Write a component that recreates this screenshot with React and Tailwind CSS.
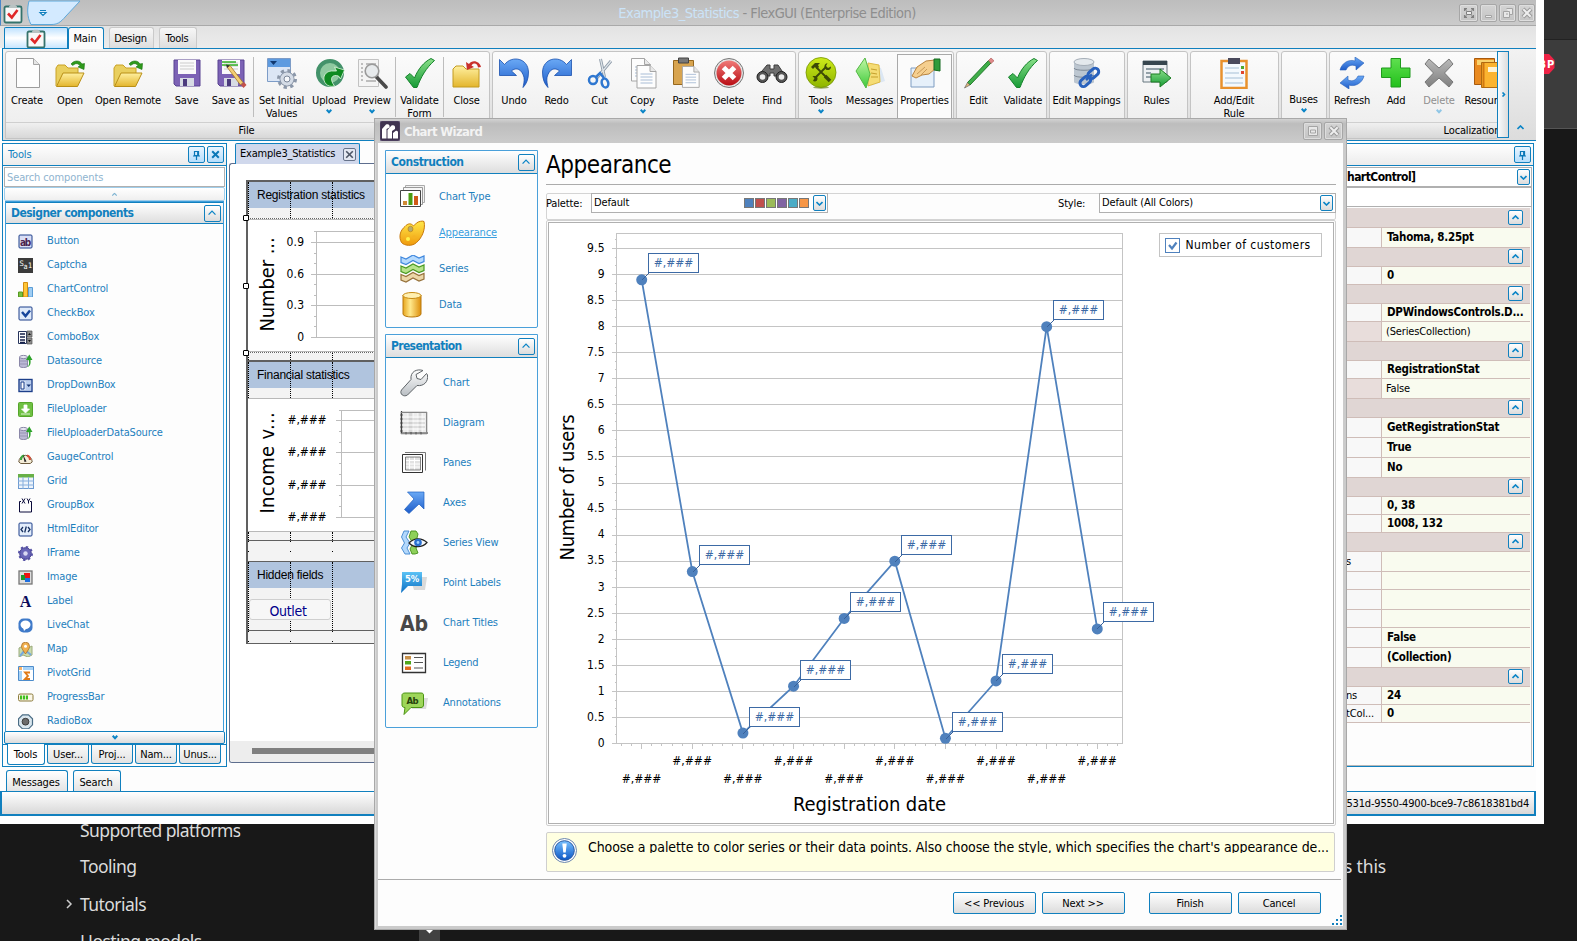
import React from "react";

const UI = "font-['DejaVu_Sans_Condensed','DejaVu_Sans',sans-serif] [font-stretch:75%]";
const SVG_FONT = { fontFamily: "'DejaVu Sans Condensed','DejaVu Sans',sans-serif" };

/* ---------- small glyphs ---------- */
const Chevron = ({ up, right, className = "text-[#0a84c6]", s = 1 }) => (
  <svg width={7 * s} height={5 * s} viewBox="0 0 7 5" className={`shrink-0 ${className}`}>
    <path d={right ? "M2.5 .5L4.5 2.5 2.5 4.5" : up ? "M.5 4L3.5 1 6.5 4" : "M.5 1L3.5 4 6.5 1"} fill="none" stroke="currentColor" strokeWidth={s > 1 ? 1.1 : 1.6} />
  </svg>
);
const DropMark = ({ className }) => (
  <svg width="6" height="5" viewBox="0 0 6 5" className={`shrink-0 ${className}`}><path d="M.7 .8L3 3.200 5.300 .8" fill="none" stroke="currentColor" strokeWidth="2" /></svg>
);

const BlueBtn = ({ className, children, hot }) => (
  <div className={`flex shrink-0 items-center justify-center rounded-[2px] border border-[#1180be] ${hot ? "bg-linear-to-b from-[#e9f5ff] to-[#b5defc]" : "bg-linear-to-b from-white to-[#dcdcdc]"} ${className}`}>{children}</div>
);

const PinGlyph = () => (
  <svg width="9" height="10" viewBox="0 0 9 10"><path d="M2.5 1.5h4v4h-4zM1 6h7M4.5 6v4M5.7 1.5v4" stroke="#0a78b8" strokeWidth="1.2" fill="none" /></svg>
);
const XGlyph = ({ c = "#0a78b8", w = 2 }) => (
  <svg width="9" height="9" viewBox="0 0 9 9"><path d="M1.2 1.2l6.6 6.6M7.8 1.2L1.2 7.8" stroke={c} strokeWidth={w} /></svg>
);

/* ---------- ribbon icons (32 x 32) ---------- */
const Folder = () => (
  <>
    <path d="M2 29V11l2-3h7l3 3h10v5" fill="#e9cf5e" stroke="#c9a227" />
    <path d="M2.5 29.5L9 16h21l-6.500 13.500z" fill="url(#gFold)" stroke="#b98f16" />
  </>
);
const GreenArrow = () => <path d="M17 7c3-4 9-4 11 0l2.500-.5-.5 6-6-2.500 2-1.500c-2-2.500-5-2.500-7 0z" fill="#2f9a1c" stroke="#16700b" strokeWidth=".6" />;
const Disk = () => (
  <>
    <path d="M3 3h26v26H5l-2-2z" fill="#7c62b5" stroke="#594391" />
    <path d="M7 3h18v14H7z" fill="#fafafa" />
    <path d="M9 6h14M9 9h14M9 12h14" stroke="#ccc" />
    <path d="M9 21h14v8H9z" fill="#d7dbe4" /><path d="M12 22h4v7h-4z" fill="#4b3a7d" />
  </>
);
const Check = () => <path d="M1.500 20l4.500-3.500 4.500 4.500C14 12 20 5 27 1.500l3.500 2C22 11 17 20 13 30.500H9.500z" fill="url(#gGreen)" stroke="#14822a" strokeLinejoin="round" />;
const UndoShape = () => <path d="M1.500 2.500l5 5C14-2 30 1 30.500 15c0 7-2 12-5.500 15.500 1-5 2-9 0-13C22 10.500 16.500 11 13.500 14l5 4.500h-17z" fill="url(#gBlue)" stroke="#1b50ae" strokeWidth=".8" />;
const Page = ({ x, y }) => (
  <g transform={`translate(${x} ${y})`}>
    <path d="M.5.5h13l6 6v16.500H.5z" fill="#fdfdfd" stroke="#a5a5a5" /><path d="M13.500.5v6h6" fill="#e8e8e8" stroke="#a5a5a5" />
    <path d="M4 9h12M4 12h12M4 15h12M4 18h12" stroke="#a9bdd6" />
  </g>
);

const RIBBON = {
  create: <><path d="M5.500 1.500h17l6 6v23h-23z" fill="#fdfdfd" stroke="#9c9c9c" /><path d="M22.500 1.500v6h6" fill="#e6e6e6" stroke="#a5a5a5" /></>,
  open: <><Folder /><GreenArrow /></>,
  save: <Disk />,
  saveas: <><Disk /><path d="M7 5h14M7 8h16" stroke="#2fae22" strokeWidth="1.500" /><path d="M12 10l3-1.500 13 17-2.500 2.500z" fill="#f4cf74" stroke="#a57622" strokeWidth=".8" /><path d="M26 28l3-3 2.500 3-3 3z" fill="#c3524a" /><path d="M11 7.500l4 1-3 2.500z" fill="#333" /></>,
  initial: <><path d="M1.500 1.500h23v23h-23z" fill="#dce6f5" stroke="#7d9cc7" /><path d="M2 2h22v8H2z" fill="#5e9be0" /><path d="M4 4h7l-3.500 4z" fill="#10386f" /><circle cx="21" cy="22" r="7" fill="#c4cedd" stroke="#7b8799" /><circle cx="21" cy="22" r="8.500" fill="none" stroke="#8b97a9" strokeWidth="3" strokeDasharray="3.300 3.400" /><circle cx="21" cy="22" r="6.500" fill="#d5dce6" /><circle cx="21" cy="22" r="3" fill="#f6f8fb" stroke="#7b8799" /></>,
  upload: <><circle cx="17" cy="16" r="12" fill="#8fc9a0" stroke="#43926a" strokeWidth="4" /><path d="M21.500 29c-12 3-15-14-3-15h5l-2 -4 10 3-4 9-2-3c-6-2-10 2-4 10z" fill="#0f8a22" stroke="#dff6e0" strokeWidth=".8" /></>,
  preview: <><path d="M2.500 2.500h20v27h-20z" fill="#f4f4f4" stroke="#c2c2c2" /><path d="M5 7h2M5 11h2M5 15h2M5 19h2M5 23h2M10 7h10M10 24h10" stroke="#aaa" strokeWidth="1.500" /><path d="M20.500 20l9.500 10" stroke="#4a4a4a" strokeWidth="3.600" strokeLinecap="round" /><circle cx="16" cy="14" r="6.800" fill="#e7eaec" stroke="#9a9a9a" strokeWidth="1.600" /></>,
  check: <Check />,
  close: <><path d="M2 12l3-3h7l3 3h13v18H2z" fill="url(#gFold)" stroke="#c29a20" /><path d="M30 10c-1-6-9-8-12-3l-3-2 1 8 7-3-2.500-1.500c2-3 6-2.500 6.500 2z" fill="#c9302b" /></>,
  undo: <UndoShape />,
  redo: <g transform="matrix(-1 0 0 1 32 0)"><UndoShape /></g>,
  cut: <g transform="translate(2 0)"><path d="M14.500 2l4 18M25 4L10 22" stroke="#8d9aa8" strokeWidth="3" /><path d="M14.500 2l4 18M25 4L10 22" stroke="#dfe5ea" strokeWidth="1.200" /><circle cx="7" cy="23" r="4" fill="none" stroke="#2f77d0" strokeWidth="2.500" /><ellipse cx="19" cy="26" rx="3.200" ry="4.500" fill="none" stroke="#2f77d0" strokeWidth="2.500" transform="rotate(-15 19 26)" /><path d="M10 20l4-4 4 5" fill="none" stroke="#2f77d0" strokeWidth="2.500" /></g>,
  copy: <><Page x="4" y="1" /><Page x="9.500" y="8" /></>,
  paste: <><path d="M3.500 3.500h20v24h-20z" fill="#d8a44f" stroke="#96671d" /><path d="M8.500 1h10v5h-10z" fill="#777" stroke="#444" /><g transform="translate(12 9) scale(.88 .93)"><Page x="0" y="0" /></g></>,
  delete: <><circle cx="16" cy="16" r="14.500" fill="#e4e4e4" stroke="#777" /><circle cx="16" cy="16" r="12.500" fill="url(#gRed)" /><path d="M10.500 10.500l11 11M21.500 10.500l-11 11" stroke="#fff" strokeWidth="5" /></>,
  find: <><path d="M6 14l5-6h3v4h4V8h4l4 6 5 5H18v-3h-4v3H1z" fill="#6e6e6e" stroke="#3c3c3c" /><circle cx="6.500" cy="20" r="5.500" fill="#555" stroke="#222" /><circle cx="25.500" cy="20" r="5.500" fill="#555" stroke="#222" /><circle cx="6.500" cy="20" r="2.800" fill="#eee" /><circle cx="25.500" cy="20" r="2.800" fill="#eee" /></>,
  tools: <><ellipse cx="16" cy="30.500" rx="8" ry="1.200" fill="#97a860" /><circle cx="16" cy="15.500" r="15" fill="url(#gLime)" stroke="#739300" strokeWidth=".8" /><path d="M11 10l10 10M21 10L10.500 20.500" stroke="#3c4a06" strokeWidth="1.800" /><path d="M6 10l4-4h5l-2 2 1 2-2 2-2-2-2 2zM22.500 6l-1.500 3 2 2 3-1.500c0 3-2 4-4.500 3.500l-2-2c-.500-2.500.500-4.500 3-5zM8 24l1.500-3-2-1.500c2-1 5-.5 5 2s-2 3.500-4.500 2.500z" fill="#3c4a06" /><path d="M20 19l5 5" stroke="#3c4a06" strokeWidth="3.500" /></>,
  messages: <><path d="M17 8l10 3 4 13-14 5z" fill="#dce7f3" /><path d="M14 6l11 2 1 17-12 4z" fill="#f5dc74" stroke="#dcb944" /><path d="M17 12l6 1M17 16l6 1M17 20l7 0" stroke="#c49f2d" /><path d="M11 1l5 16-4 14L2 14z" fill="url(#gLeaf)" stroke="#54b845" /></>,
  props: <><path d="M2 11h23v19H2z" fill="#e6f0fa" stroke="#7e9dc2" /><path d="M3 19l5-9 9-6 9-1v9l-6 5-7 1-6 3z" fill="#f5cf8f" stroke="#b98440" /><path d="M8 17l8-7M11 19l7-7" stroke="#c99a58" /><path d="M25 2h6v12l-6-1z" fill="#2f9b3a" stroke="#156b20" /></>,
  edit: <><path d="M4.500 25.500L25.500 3.500l2.500 2.500L7 28z" fill="#3fae49" stroke="#227a2b" /><path d="M25.500 3.500l2.500-2.500 3 2.800L28 6.500z" fill="#e08a8a" stroke="#a55" strokeWidth=".6" /><path d="M1.500 31l3-5.500L7 28z" fill="#dcb77a" stroke="#555" strokeWidth=".6" /></>,
  maps: <><path d="M3 5v20c0 3 20 3 20 0V5" fill="#bcc6d0" /><path d="M3 11c0 3 20 3 20 0M3 18c0 3 20 3 20 0" fill="none" stroke="#7f8a96" /><ellipse cx="13" cy="5" rx="10" ry="3.500" fill="#e4e9ed" stroke="#a5aeb8" /><g fill="none" stroke="#2a62bd" strokeWidth="3"><rect x="8" y="21" width="12" height="7" rx="3.500" transform="rotate(-42 14 24)" /><rect x="16" y="13" width="12" height="7" rx="3.500" transform="rotate(-42 22 16)" /><path d="M15 23l6-5.500" strokeWidth="2.500" /></g></>,
  rules: <><path d="M2 4h24v21H2z" fill="#eef1f3" stroke="#66777f" /><path d="M2 4h24v4H2z" fill="#37464f" /><path d="M5 12h18M5 16h5M5 20h5" stroke="#93a1a9" strokeWidth="2" /><path d="M10 17h9v-5l11 9-11 9v-5h-9z" fill="url(#gGreen)" stroke="#1c7d22" /></>,
  addedit: <><path d="M3.500 4h25v27h-25z" fill="#f4f9fd" stroke="#e8912d" strokeWidth="2.500" /><path d="M10 1h12v6H10z" fill="#4a4a5c" /><path d="M7 11h14M7 16h14M7 21h18M7 26h18" stroke="#cddce9" strokeWidth="2" /><path d="M23 9h3v3h-3z" fill="#4fa92c" /><path d="M23 14h3v3h-3z" fill="#e0472f" /></>,
  refresh: <><path d="M4 13C6 5 14 2 19 4V0l9 6-8 7V9c-5-2-8 0-10 4z" fill="url(#gBlue)" stroke="#2a61bb" strokeWidth=".6" /><path d="M28 19c-2 8-10 11-15 9v4l-9-6 8-7v4c5 2 8 0 10-4z" fill="url(#gBlue)" stroke="#2a61bb" strokeWidth=".6" /></>,
  add: <path d="M11 1.500h9.500V11H30v9.500h-9.500V30H11v-9.500H1.500V11H11z" fill="url(#gGreen2)" stroke="#1f9a1c" />,
  del2: <path d="M6 2l10 9 10-9 4 5-8.500 9L30 25l-4 5-10-9-10 9-4-5 8.500-9L2 7z" fill="url(#gGray)" stroke="#777" />,
  res: <><path d="M1.500 1.500h20v26h-20z" fill="#e98a1f" stroke="#a85a0d" /><path d="M4 3h17v5H4z" fill="#f9d26c" /><path d="M8.500 5.500h22v25h-22z" fill="#fbb430" stroke="#b06a10" /><path d="M10.500 6v24" stroke="#d17811" strokeWidth="2" /><path d="M15 10h10v5H15z" fill="#fff4d5" /></>,
};

const Defs = () => (
  <svg width="0" height="0" className="absolute">
    <defs>
      {[["gFold", "#fff0a0", "#e3b52c"], ["gGreen", "#8be08a", "#169a35"], ["gGreen2", "#5fe04f", "#22c01b"], ["gBlue", "#6aa9f5", "#1e5cc9"], ["gRed", "#f07a78", "#b90d14"], ["gLime", "#cdea1a", "#8fb500"], ["gLeaf", "#c2f7a5", "#3cc93a"], ["gGray", "#b9b9b9", "#7f7f7f"], ["gGold", "#ffe84a", "#f09a0c"], ["gSky", "#5cc2f5", "#0a6fc4"], ["gInfo", "#78c0ff", "#0b56c4"], ["gSteel", "#ffffff", "#b9bec3"]].map(([id, a, b]) => (
        <linearGradient key={id} id={id} x1="0" y1="0" x2="0" y2="1"><stop offset="0" stopColor={a} /><stop offset="1" stopColor={b} /></linearGradient>
      ))}
      <linearGradient id="gCyl" x1="0" y1="0" x2="1" y2="0"><stop offset="0" stopColor="#e7a51c" /><stop offset=".4" stopColor="#ffe98c" /><stop offset="1" stopColor="#dd8f0c" /></linearGradient>
    </defs>
  </svg>
);

const RBtn = ({ icon, w, lines, drop, dim, active }) => (
  <div className={`flex h-full shrink-0 flex-col items-center pt-[5px] ${w} ${active ? "mt-[2px] border border-[#a9a9a9] bg-[#fbfbfb] !pt-[2px]" : ""}`}>
    <svg width="32" height="32" viewBox="0 0 32 32" className="h-[32px] w-[32px] shrink-0">{RIBBON[icon]}</svg>
    <div className={`mt-[5px] text-center whitespace-nowrap ${dim ? "text-[#8f8f8f]" : "text-black"}`}>
      {lines.map((l) => <div key={l} className="h-[13px] leading-[14px]">{l}</div>)}
    </div>
    {drop && <DropMark className={dim ? "mt-[2px] text-[#8fc6e6]" : "mt-[2px] text-[#0a84c6]"} />}
  </div>
);
const Sep = () => <div className="mt-[5px] mr-px ml-[1px] h-[60px] w-px shrink-0 bg-[#bdbdbd]" />;
const Group = ({ w, caption = "", cc = "", children }) => (
  <div className={`flex h-[88px] shrink-0 flex-col overflow-hidden rounded-t-[3px] border border-[#c4c4c4] bg-linear-to-b from-[#fbfbfb] to-[#ececec] ${w}`}>
    <div className="flex h-[70px] shrink-0 justify-start">{children}</div>
    <div className={`h-[17px] shrink-0 border-t border-[#cfcfcf] bg-linear-to-b from-[#f0f0f0] to-[#d6d6d6] text-center leading-[15px] ${cc}`}>{caption}</div>
  </div>
);

const AppIcon = () => (
  <svg width="20" height="20" viewBox="0 0 20 20"><rect x="1.500" y="2.500" width="17" height="16" rx="1.500" fill="#f8f8f8" stroke="#35736c" strokeWidth="1.800" /><path d="M6 2.500L8 .8h4l2 1.700v1.500H6z" fill="#b9c3c3" /><path d="M5 9.500l3.800 4L14.500 6" fill="none" stroke="#e02828" strokeWidth="2.600" /></svg>
);

const WinBtn = ({ kind, w = "w-[17px]" }) => (
  <div className={`flex h-[18px] items-center justify-center rounded-[2px] border border-[#a6a6a6] bg-linear-to-b from-[#d4d4d4] to-[#c4c4c4] shadow-[inset_0_0_0_1px_#dedede] ${w}`}>
    <svg width="12" height="12" viewBox="0 0 12 12" fill="none">
      {kind === "min" && <path d="M2.500 8.500h6v2h-6z" fill="#eee" stroke="#a4a4a4" />}
      {kind === "restore" && <path d="M4.500 1.500h6v6h-2.500M1.500 4.500h6v6h-6zM4 7h2" fill="#e8e8e8" stroke="#a4a4a4" />}
      {kind === "max" && <><path d="M1.500 1.500h9v9h-9z" fill="#e8e8e8" stroke="#a4a4a4" /><path d="M3.500 5h5v3h-5z" stroke="#a4a4a4" /></>}
      {kind === "x" && <><path d="M2 2l8 8M10 2l-8 8" stroke="#999" strokeWidth="4" /><path d="M2.300 2.300l7.400 7.400M9.700 2.300l-7.400 7.400" stroke="#eee" strokeWidth="2" /></>}
      {kind === "full" && <><path d="M1.500 4V1.500H4M8 1.500h2.500V4M10.500 8v2.500H8M4 10.500H1.500V8M1.500 1.500l2 2M10.500 1.500l-2 2M10.500 10.500l-2-2M1.500 10.500l2-2" stroke="#808080" strokeWidth="1.100" /><path d="M3.500 4.500h5v3h-5z" fill="#eee" stroke="#808080" /></>}
    </svg>
  </div>
);

/* ---------- toolbox ---------- */
const tile = (bg, st) => <rect x="1" y="1" width="13" height="13" rx="1" fill={bg} stroke={st} />;
const db = <><path d="M1.500 3v9c0 2 8 2 8 0V3" fill="#bcb9d6" stroke="#8a87a8" /><ellipse cx="5.500" cy="3" rx="4" ry="1.600" fill="#e7e6f1" stroke="#8a87a8" /><path d="M2 7h7M2 10h7" stroke="#8a87a8" strokeWidth=".7" /><path d="M8.500 13c3-1 3-4 2-7H8L11.300.500 14.500 6h-2c.5 4-.5 7-4 7z" fill="#2da32a" /></>;
const TOOLBOX = [
  ["Button", <>{tile("#d9def5", "#1d3f8a")}<text x="7.500" y="11.500" textAnchor="middle" fontSize="10" fontWeight="bold" fill="#4b2450" style={SVG_FONT} textLength="11">ab</text></>],
  ["Captcha", <><rect width="15" height="15" fill="#3b3b3b" /><text x="1.500" y="8" fontSize="7.500" fill="#fff" style={SVG_FONT}>S</text><text x="5.500" y="11" fontSize="7.500" fill="#fff" style={SVG_FONT}>a</text><text x="10" y="9.500" fontSize="7.500" fill="#fff" style={SVG_FONT}>1</text></>],
  ["ChartControl", <><path d="M.5 10h4v5h-4z" fill="#7cc242" stroke="#569a22" /><path d="M5.500.5h4V15h-4z" fill="#ffc637" stroke="#d58f12" /><path d="M10.500 5.500h4V15h-4z" fill="#9fcdf3" stroke="#5a9dd6" /></>],
  ["CheckBox", <>{tile("#dfeafa", "#1d3f8a")}<path d="M4 6l3.500 4L12 4.500" fill="none" stroke="#16459b" strokeWidth="2.500" /></>],
  ["ComboBox", <><path d="M.5 1.500h8v12h-8z" fill="#fff" stroke="#26345c" /><path d="M2 4h5M2 7h5M2 10h5M2 12.500h5" stroke="#16204a" strokeWidth="1.500" /><path d="M9 1h5v6H9zM9 8h5v6H9z" fill="#8d8d8d" stroke="#555" strokeWidth=".7" /><path d="M10 5l1.500-2L13 5zM10 10l1.500 2L13 10z" fill="#111" /></>],
  ["Datasource", db],
  ["DropDownBox", <><rect x="1" y="1.500" width="13" height="12" fill="#cfdcf3" stroke="#1d3f8a" strokeWidth="1.400" /><path d="M3 4h3v7H3z" fill="#fff" stroke="#1d3f8a" /><path d="M8 3h5v9H8z" fill="#b9cdee" /><path d="M8.500 6.500h4.500L10.700 9z" fill="#12306e" /></>],
  ["FileUploader", <><rect x=".5" y=".5" width="14" height="14" rx="1" fill="#6fc043" stroke="#55a52b" /><path d="M6 3h3v4h2.500l-4 4-4-4H6zM3 12h9" fill="#fff" stroke="#fff" strokeWidth=".8" /></>],
  ["FileUploaderDataSource", db],
  ["GaugeControl", <><path d="M.8 12a6.700 6.700 0 1113.400 0l-2 1.500h-9.400z" fill="#f5edd8" stroke="#6e5c3e" /><path d="M3 10a4.500 4.500 0 013-4.500" stroke="#3da83d" strokeWidth="2" fill="none" /><path d="M9 5.500a4.500 4.500 0 013 4.500" stroke="#d84b37" strokeWidth="2" fill="none" /><path d="M5 4.500l3.500 7-2 .5z" fill="#222" /></>],
  ["Grid", <><rect x=".5" y=".5" width="15" height="14" fill="#eef4fb" stroke="#6d9ad0" /><path d="M0 0h16v3.500H0z" fill="#68b047" /><path d="M0 7h16M0 11h16M5 3v12M10.500 3v12" stroke="#86aedd" /></>],
  ["GroupBox", <><path d="M3 3.500H1.500v10.500h12V3.500H12" fill="none" stroke="#0a0a3a" /><path d="M4 .5l3 5M7 .5l-3 5M9 .5l1.500 2.500L12 .5M10.500 3v2.500" stroke="#0a0a3a" fill="none" /></>],
  ["HtmlEditor", <>{tile("#e3edfb", "#1d3f8a")}<path d="M5 5L3 7.500 5 10M10 5l2 2.500L10 10M8.300 4.500l-1.600 6" stroke="#17305f" strokeWidth="1.300" fill="none" /></>],
  ["IFrame", <><circle cx="7.500" cy="7.500" r="5.800" fill="#6a66b8" stroke="#3e3a8a" /><circle cx="7.500" cy="7.500" r="6.600" fill="none" stroke="#5551a5" strokeWidth="1.800" strokeDasharray="2.400 2.800" /><circle cx="7.500" cy="7.500" r="2.200" fill="#dad9f2" /></>],
  ["Image", <><rect x="1" y="1" width="13" height="13" fill="#ddd" stroke="#777" strokeWidth="1.300" /><path d="M6 3h6v5H6z" fill="#e11" /><path d="M3 5h4v5H3z" fill="#1a9a2e" /><path d="M7 8h5v4H7z" fill="#1e6fe0" /></>],
  ["Label", <text x="7.500" y="13" textAnchor="middle" fontSize="16" fontWeight="bold" fill="#0b0b5a" fontFamily="Liberation Serif">A</text>],
  ["LiveChat", <><rect x=".5" y=".5" width="14" height="14" rx="5" fill="#3f7ac9" /><ellipse cx="7.500" cy="6.700" rx="5" ry="4.200" fill="#fff" /><path d="M5 9l1 4 3-3z" fill="#fff" /></>],
  ["Map", <><path d="M1 6l4-2 5 2 4-2v9l-4 2-5-2-4 2z" fill="#c9dcae" stroke="#9cab7c" /><path d="M2 14l5-6 6 5" stroke="#76a9dd" strokeWidth="2" fill="none" /><path d="M7.500 12C4 7 3.500 6 3.500 4.200a4 4 0 018 0c0 1.800-.5 2.800-4 7.800z" fill="#f0b050" stroke="#a8702a" strokeWidth=".8" /><circle cx="7.500" cy="4.200" r="1.500" fill="#fff" /></>],
  ["PivotGrid", <><path d="M.5.5h15v14H.5z" fill="#fff" stroke="#4d8ccb" /><path d="M1 1h3v3H1z" fill="#f9b36a" /><path d="M5 1h10v3H5zM1 5h3v9H1z" fill="#a8d3f7" /><path d="M12 6.500H7l3 3.500-3 3h5" fill="none" stroke="#e07a18" strokeWidth="1.800" /></>],
  ["ProgressBar", <><rect x=".5" y="4" width="14.500" height="7" rx="1.500" fill="#fbf7e8" stroke="#8a7a3a" /><path d="M2 5.500h2.200v4H2zM5 5.500h2.200v4H5zM8 5.500h2v4H8z" fill="#3fbf1e" /></>],
  ["RadioBox", <><path d="M4.500.8h6l4 4v6l-4 4h-6l-4-4v-6z" fill="#d9e6ee" stroke="#4a6c84" strokeWidth="1.200" /><circle cx="7.500" cy="7.700" r="3.400" fill="#6b6b6b" stroke="#3c3c3c" /></>],
];

const PanelHead = ({ title, className = "", titleCls = "" }) => (
  <div className={`flex items-center justify-between border-b border-[#1180be] bg-linear-to-b from-white to-[#dedede] ${className}`}>
    <span className={`font-bold text-[#1180be] ${titleCls}`}>{title}</span>
    <BlueBtn className="mr-[2px] h-[17px] w-[17px]"><Chevron up s={1.15} /></BlueBtn>
  </div>
);

const LeftPanel = () => (
  <div className="mt-[2px] ml-[2px] flex h-[624px] w-[225px] shrink-0 flex-col border border-[#1180be] bg-[#fdfdfd]">
    <div className="flex h-[22px] shrink-0 items-center border-b border-[#1180be] bg-linear-to-b from-white to-[#ececec] pr-[2px] pl-[5px]">
      <span className="flex-1 pt-[2px] text-[#1180be]">Tools</span>
      <BlueBtn hot className="mr-[2px] h-[17px] w-[17px]"><PinGlyph /></BlueBtn>
      <BlueBtn hot className="h-[17px] w-[17px]"><XGlyph /></BlueBtn>
    </div>
    <div className="mx-[1px] mt-px h-[20px] shrink-0 border border-[#b0b0b0] bg-white pl-[2px] leading-[20px] tracking-[-0.12px] text-[#8fb4cf]">Search components</div>
    <div className="mx-[1px] flex h-[14px] shrink-0 items-center justify-center rounded-[2px] border border-[#9fcdea] bg-linear-to-b from-white to-[#efefef]"><Chevron up className="scale-75 text-[#7fb4d2]" /></div>
    <div className="mx-[2px] flex min-h-0 flex-1 flex-col border border-b-0 border-[#3f9edb] bg-[#fdfdfd]">
      <PanelHead title="Designer components" className="h-[22px] shrink-0 border-t pl-[5px]" titleCls="text-[12px] tracking-[-0.54px]" />
      <div className="flex flex-col overflow-hidden pt-[5px]">
        {TOOLBOX.map(([n, ic]) => (
          <div key={n} className="flex h-[24px] shrink-0 items-center pl-[12px]">
            <svg width="16" height="15" viewBox="0 0 16 15" className="shrink-0">{ic}</svg>
            <span className="ml-[13px] pt-px text-[#1e80bd]">{n}</span>
          </div>
        ))}
      </div>
    </div>
    <div className="mx-[1px] flex h-[13px] shrink-0 items-center justify-center rounded-[2px] border border-[#1180be] bg-linear-to-b from-white to-[#dcdcdc]"><DropMark className="text-[#0a84c6]" /></div>
    <div className="flex h-[22px] shrink-0 gap-[2px] border-t border-[#1180be] pl-[4px] leading-[19px]">
      <div className="-mt-px h-[21px] w-[38px] rounded-b-[3px] border border-t-0 border-[#1180be] bg-white pr-px text-center leading-[21px]">Tools</div>
      {["User...", "Proj...", "Nam...", "Unus..."].map((t) => (
        <div key={t} className="h-[19px] w-[42px] rounded-b-[3px] border border-t-0 border-[#1180be] bg-linear-to-b from-[#fafafa] to-[#e2e2e2] text-center">{t}</div>
      ))}
    </div>
  </div>
);

/* ---------- designer canvas ---------- */
const Dots = ({ children }) => (
  <>
    {children}
    <div className="absolute inset-y-0 left-0 w-px border-l border-dotted border-black" />
    <div className="absolute inset-y-0 left-[42px] w-px border-l border-dotted border-black" />
    <div className="absolute inset-y-0 left-[84px] w-px border-l border-dotted border-black" />
  </>
);
const BandTitle = ({ children }) => (
  <div className="h-[26px] bg-[#b0c4de] pl-[9px] font-['Liberation_Sans',sans-serif] text-[12px] leading-[27px] tracking-[-0.24px] text-black">{children}</div>
);
const Handle = ({ className }) => <div className={`absolute h-[6px] w-[6px] rounded-[1px] border border-black bg-white ${className}`} />;

const MiniAxis = ({ labels, ax, title, titleY, lx, tl, y0, gap, top, h, w0, dy = 3.5 }) => (
  <svg width="134" height={h} viewBox={`248 ${top} 134 ${h}`} className="block">
    <text transform={`translate(274 ${titleY}) rotate(-90)`} fontSize="20" style={SVG_FONT} textLength={tl}>{title}</text>
    <path d={`M${ax - 2} ${top + 11.500}H390M${ax + .5} ${top + 11.500}V${y0 + gap * 3}`} stroke="#bdbdbd" fill="none" />
    {labels.map((l, i) => {
      const y = y0 + i * gap;
      return (
        <g key={i}>
          <path d={`M${ax - 5} ${Math.floor(y) + .5}H390`} stroke="#bdbdbd" />
          {i < 3 && <path d={`M${ax - 2} ${Math.floor(y + gap / 3) + .5}h2M${ax - 2} ${Math.floor(y + gap / 1.500) + .5}h2`} stroke="#bdbdbd" />}
          <text x={lx} y={y + dy} fontSize="12" textAnchor="end" style={SVG_FONT} textLength={w0(l)}>{l}</text>
        </g>
      );
    })}
  </svg>
);

const SmallDots = ({ className }) => (
  <div className={`flex gap-[41px] ${className}`}>{[0, 1, 2, 3].map((i) => <div key={i} className="h-px w-px shrink-0 bg-black" />)}</div>
);

const Designer = () => (
  <div className="flex w-[160px] shrink-0 flex-col pt-[2px] pl-[2px]">
    <div className="z-10 ml-[6px] flex h-[21px] w-[125px] shrink-0 items-center rounded-t-[2px] border border-b-0 border-[#1180be] bg-[#d0d8ec] pl-[4px] text-black">
      <span className="flex-1 pt-px tracking-[-0.22px]">Example3_Statistics</span>
      <div className="mr-[3px] flex h-[13px] w-[13px] items-center justify-center rounded-[2px] border border-[#66728a] bg-[#e4e8f2]"><XGlyph c="#4d5566" w={1.600} /></div>
    </div>
    <div className="-mt-px flex h-[600px] flex-col overflow-hidden rounded-l-[3px] border border-r-0 border-[#5e6e8e] bg-white">
      <div className="relative mt-[16px] ml-[16px] flex h-[464px] shrink-0 flex-col border-l-2 border-[#606060]">
        <div className="h-[2px] shrink-0 bg-[#606060]" />
        <div className="relative h-[36px] shrink-0 bg-[#f3f3f3]"><Dots><BandTitle>Registration statistics</BandTitle></Dots></div>
        <div className="h-px shrink-0 border-t border-dotted border-[#666]" />
        <div className="h-[133px] shrink-0 border-y border-[#b8b8b8] bg-white">
          <MiniAxis labels={["0.9", "0.6", "0.3", "0"]} ax={316} title="Number ..." titleY={331.500} lx={304} tl={94} y0={242.500} gap={31.600} top={220} h={131} w0={(l) => (l === "0" ? 6.500 : 17.500)} />
        </div>
        <div className="h-px shrink-0 border-t border-dotted border-[#666]" />
        <div className="relative h-[7px] shrink-0 bg-[#f3f3f3]"><Dots /></div>
        <div className="h-[2px] shrink-0 bg-[#606060]" />
        <div className="relative h-[36px] shrink-0 bg-[#f3f3f3]"><Dots><BandTitle>Financial statistics</BandTitle></Dots></div>
        <div className="h-[134px] shrink-0 border-y border-[#b8b8b8] bg-white">
          <MiniAxis labels={["#,###", "#,###", "#,###", "#,###"]} ax={341} title="Income v..." titleY={513.500} lx={326.500} tl={101} y0={420.500} gap={32.300} top={399} h={132} w0={() => 39} dy={3.500} />
        </div>
        <div className="relative h-[8px] shrink-0 bg-[#f3f3f3]"><Dots /></div>
        <div className="h-[22px] shrink-0 border-y border-[#606060] bg-[#f3f3f3]"><SmallDots /><SmallDots className="mt-[9px]" /></div>
        <div className="relative h-[68px] shrink-0 bg-[#f3f3f3]">
          <Dots><BandTitle>Hidden fields</BandTitle></Dots>
          <div className="relative mt-[11px] ml-[1px] h-[21px] w-[82px] rounded-[3px] border border-[#cfcfcf] bg-[#f7f7f7] pr-[4px] text-center text-[14px] leading-[23px] tracking-[-0.3px] text-[#00008b]">Outlet</div>
        </div>
        <div className="h-[14px] shrink-0 border-y border-[#606060] bg-[#f3f3f3]"><SmallDots /><SmallDots className="mt-[9px]" /></div>
        <Handle className="top-[35px] -left-[5px]" />
        <Handle className="top-[103px] -left-[5px]" />
        <Handle className="top-[170px] -left-[5px]" />
      </div>
      <div className="flex-1" />
      <div className="h-[21px] shrink-0 bg-[#ededed] pt-[7px]"><div className="ml-[22px] h-[6px] w-[150px] bg-[#808080]" /></div>
    </div>
  </div>
);

/* ---------- property grid ---------- */
const C = "cat";
const PROPS = [
  [C, "h-[20px]"], ["Tahoma, 8.25pt", "h-[20px]", 1], [C, "h-[19px]"], ["0", "h-[18px]", 1], [C, "h-[19px]"],
  ["DPWindowsControls.D...", "h-[18px]", 1], ["(SeriesCollection)", "h-[20px]", 0], [C, "h-[19px]"], ["RegistrationStat", "h-[18px]", 1], ["False", "h-[20px]", 0],
  [C, "h-[19px]"], ["GetRegistrationStat", "h-[20px]", 1], ["True", "h-[20px]", 1], ["No", "h-[20px]", 1], [C, "h-[19px]"], ["0, 38", "h-[18px]", 1], ["1008, 132", "h-[18px]", 1],
  [C, "h-[19px]"], ["", "h-[20px]", 1, "s"], ["", "h-[18px]", 1], ["", "h-[20px]", 1], ["", "h-[18px]", 1], ["False", "h-[20px]", 1], ["(Collection)", "h-[20px]", 1],
  [C, "h-[19px]"], ["24", "h-[18px]", 1, "ns"], ["0", "h-[18px]", 1, "tCol..."],
];
const RightPanel = () => (
  <div className="mt-[2px] mr-[2px] ml-auto flex h-[624px] w-[200px] shrink-0 flex-col border border-[#1180be] bg-[#fdfdfd]">
    <div className="flex h-[22px] shrink-0 items-center justify-end border-b border-[#1180be] bg-linear-to-b from-white to-[#ececec] pr-[2px]"><BlueBtn hot className="h-[17px] w-[17px]"><PinGlyph /></BlueBtn></div>
    <div className="mt-px mr-px flex h-[20px] shrink-0 items-center justify-between border border-[#b0b0b0] bg-white pr-px pl-[11px] text-[12px] font-bold tracking-[-0.55px]"><span>hartControl]</span><BlueBtn className="h-[16px] w-[13px]"><Chevron /></BlueBtn></div>
    <div className="mr-px h-[20px] shrink-0 border border-[#b0b0b0] bg-white" />
    <div className="mr-px flex flex-1 flex-col border-r border-b border-[#b8b8b8] pt-px pr-px">
      {PROPS.map(([v, h, b, n], i) => v === C ? (
        <div key={i} className={`flex shrink-0 items-center justify-end border-b border-[#cfbdb8] bg-[#e0d6d4] pr-[7px] ${h}`}><BlueBtn className="-mt-px h-[15px] w-[15px]"><Chevron up /></BlueBtn></div>
      ) : (
        <div key={i} className={`flex shrink-0 items-center border-b border-[#cfbdb8] bg-[#f9fbef] ${h}`}>
          <div className={`flex h-full w-[47px] items-center justify-start overflow-hidden border-r border-[#cfbdb8] pt-px pl-[11px] whitespace-nowrap ${b ? "bg-[#f8f8f8]" : "bg-[#e8dddb]"}`}>{n}</div>
          <span className={`whitespace-nowrap ${b ? "pl-[5px] text-[11.500px] font-bold tracking-[-0.25px]" : "pt-px pl-[4px]"}`}>{v}</span>
        </div>
      ))}
    </div>
  </div>
);

/* ---------- chart ---------- */
const VALUES = [8.9, 3.3, 0.2, 1.1, 2.4, 3.5, 0.1, 1.2, 8, 2.2];
const px = (i) => 641.700 + i * 50.620;
const py = (v) => 743.500 - v * 52.100;
const Chart = () => (
  <svg width="783" height="600" viewBox="549 223 783 600" className="block" style={SVG_FONT}>
    <g stroke="#c4c4c4" fill="none" shapeRendering="crispEdges">
      <path d="M616.500 233.500H1122.500V743.500H616.500z" />
      {Array.from({ length: 20 }, (_, i) => {
        const y = Math.floor(py(i / 2)) + .5;
        return <path key={i} d={`M611.500 ${y}H1122.500M614.500 ${y - 9}h2${i < 19 ? `M614.500 ${y - 17}h2` : ""}`} />;
      })}
      {Array.from({ length: 50 }, (_, i) => {
        const x = px(0) - 20.250 + i * 10.124;
        return x > 617 && x < 1122 ? <path key={i} d={`M${x} 743.500v${(i - 2) % 5 === 0 ? 5 : 2.500}`} /> : null;
      })}
    </g>
    {Array.from({ length: 20 }, (_, i) => (
      <text key={i} x="604.500" y={py(i / 2) + 3.300} fontSize="12" textAnchor="end" textLength={i % 2 ? 17.500 : 6.500}>{i / 2}</text>
    ))}
    <text transform="translate(573.500 560.500) rotate(-90)" fontSize="20" textLength="146">Number of users</text>
    <text x="793" y="811" fontSize="20" textLength="153">Registration date</text>
    {VALUES.map((v, i) => (
      <text key={i} x={px(i) - 20} y={i % 2 ? 765 : 783} fontSize="12" textLength="39.500">#,###</text>
    ))}
    <polyline points={VALUES.map((v, i) => `${px(i)},${py(v)}`).join(" ")} fill="none" stroke="#4f81bd" strokeWidth="1.800" />
    {VALUES.map((v, i) => (
      <g key={i}>
        <circle cx={px(i)} cy={py(v)} r="5.500" fill="#4f81bd" />
        <g transform={`translate(${Math.round(px(i) + .2)} ${Math.ceil(py(v) - .01)})`}>
          <path d="M0 0L7-7" stroke="#38619a" />
          <rect x="6.500" y="-26.500" width="50" height="19" fill="#fff" stroke="#3d6aa5" />
          <text x="11.700" y="-13" fontSize="12" fill="#3d6aa5" textLength="39.500">#,###</text>
        </g>
      </g>
    ))}
    <rect x="1159.500" y="233.500" width="162" height="23" fill="#fff" stroke="#c4c4c4" />
    <rect x="1165.500" y="238.500" width="14" height="14" fill="#fff" stroke="#4f81bd" />
    <path d="M1169 245l3 3.500 4.500-6" fill="none" stroke="#4f81bd" strokeWidth="2.200" />
    <text x="1185.500" y="248.800" fontSize="12" textLength="124.500">Number of customers</text>
  </svg>
);

/* ---------- wizard icons (28 x 28) ---------- */
const gridLines = "M3 8h22M3 12h22M3 16h22M3 20h22M8 4v20M13 4v20M18 4v20M22 4v20";
const wave = (y) => `M2 ${y + 2}l5 2 7-4 6 3 5-2v5.500l-5 2-6-3-7 4-5-2z`;
const NAV1 = [
  ["Chart Type", <><path d="M6.500 2.500h19v17h-19z" fill="#f2f2f2" stroke="#aaa" /><path d="M4.500 4.500h19v17h-19z" fill="#f6f6f6" stroke="#999" /><path d="M1.500 7.500h20v16h-20z" fill="#fff" stroke="#444" /><path d="M4 18h4v4H4z" fill="#d08b35" /><path d="M9.500 10h4v12h-4z" fill="#4a9d12" /><path d="M15 13h4v9h-4z" fill="#d05a18" /></>],
  ["Appearance", <><path d="M6 7.500C9 4 12 4.500 13.500 6s2 0 4-2c2-1.500 6-2.500 7.500-1.500C27 11 22 20 17.500 23.500c-4 4-12 3.500-15 0C-.5 18 1 11.500 6 7.500z" fill="url(#gGold)" stroke="#c8790a" /><ellipse cx="11.500" cy="10" rx="2.500" ry="2.800" fill="#b5aa70" stroke="#b37c10" strokeWidth=".6" /><circle cx="9" cy="20" r="2" fill="#fff24a" /><circle cx="15" cy="18" r="1.800" fill="#f5b323" /></>],
  ["Series", <>{[["#3f87dd", "#b5dafe", 0], ["#4a9a22", "#b7e38c", 9], ["#96713a", "#ecd7a8", 17.500]].map(([a, b, y]) => <path key={y} d={wave(y)} fill={b} stroke={a} strokeWidth="1.200" />)}</>],
  ["Data", <><path d="M4 4v19c0 4 18 4 18 0V4" fill="url(#gCyl)" stroke="#b9780c" /><ellipse cx="13" cy="4.500" rx="9" ry="3" fill="#fff0b0" stroke="#c68a12" /></>],
];
const NAV2 = [
  ["Chart", <path d="M23 1.500c-6-2-13 1-12 9L1.500 21c-2.500 4 2.500 7.500 6 5L17 16.500c7 1 11.500-4 10.500-10.500l-1-1.500-5.500 6-4-1-1-4z" fill="url(#gSteel)" stroke="#5f6468" strokeLinejoin="round" />],
  ["Diagram", <><path d="M1 3h26v22H1z" fill="#ececec" stroke="#bbb" /><path d="M8 4h5v20H8zM18 4h4v20h-4z" fill="#d9d9d9" /><path d={gridLines} stroke="#fbfbfb" /><path d="M3 10h22M3 14h22M3 18h22" stroke="#bdbdbd" strokeWidth=".6" /><path d="M1.500 2v22H28" fill="none" stroke="#444" strokeWidth="1.200" /><path d="M1 3.500h26M26.500 3.500V24" fill="none" stroke="#888" /><path d="M0 6h3M0 10h3M0 14h3M0 18h3M0 22h3M6 23v2.500M11 23v2.500M16 23v2.500M21 23v2.500" stroke="#444" strokeWidth=".8" /></>],
  ["Panes", <><path d="M5 3.500h20.500v18" fill="none" stroke="#777" /><path d="M2.500 5.500h20v18h-20z" fill="#fff" stroke="#333" /><path d="M5 8h15v13H5z" fill="#e2e2e2" /><path d="M5 11.500h15M5 15h15M5 18h15M9.500 8v13M14.500 8v13" stroke="#fff" /><path d="M5.500 8v13H20.500V8z" fill="none" stroke="#666" strokeWidth=".8" /></>],
  ["Axes", <path d="M7.500 5h16.500v17l-5-5L9 26.500l-4.500-4L14 12z" fill="url(#gBlue)" stroke="#1c5fc0" strokeWidth=".7" transform="translate(0 -2)" />],
  ["Series View", <><path d="M4 2h5l-3 6 4 6-3 5 3 6H5l-3.500-6 3-5-3-6z" fill="#b3d8fb" stroke="#3d86d0" strokeWidth=".9" /><path d="M11 2h5l2 3-1 4 2 4-3 6 2 5-3 1h-3l-2-5 3-6-4-6z" fill="#8ed05a" stroke="#448f1b" strokeWidth=".9" /><path d="M9 14c5-5.500 13-5.500 18-.5-5 5.500-13 5.500-18 .5z" fill="#f5f8fb" stroke="#222" strokeWidth="1.200" /><circle cx="18" cy="13.500" r="3.800" fill="#2a6fd0" /><circle cx="18" cy="13.500" r="1.400" fill="#9fd0ff" /></>],
  ["Point Labels", <><path d="M10 8h17l-2 13H14z" fill="#dadada" /><path d="M2 3h20v14H8l-7 7 1-9z" fill="url(#gSky)" /><text x="12" y="13" fontSize="9" fontWeight="bold" fill="#fff" textAnchor="middle" style={SVG_FONT} textLength="14" lengthAdjust="spacingAndGlyphs">5%</text></>],
  ["Chart Titles", <text x="0" y="21.500" fontSize="22" fontWeight="bold" fill="#484848" style={SVG_FONT} textLength="28" lengthAdjust="spacingAndGlyphs">Ab</text>],
  ["Legend", <><path d="M2.500 4.500h23v19h-23z" fill="#fff" stroke="#333" strokeWidth="1.300" /><path d="M5 7h6v3.500H5z" fill="#c8914a" /><path d="M5 12h6v3.500H5z" fill="#4fa51b" /><path d="M5 17.500h6V21H5z" fill="#df6a20" /><path d="M14 8.500h9M14 13.500h9M14 19h9" stroke="#555" /></>],
  ["Annotations", <><path d="M8 9h20l-2 11H12z" fill="#dcdcdc" /><path d="M5 4h16c2 0 2.500 1 2.500 2v10c0 1.500-1 2.500-2.500 2.500H11l-7 7 1-7c-2 0-3-1-3-2.500V6c0-1 1-2 3-2z" fill="#9ed65a" stroke="#4b9412" /><text x="12.500" y="14.500" fontSize="9.500" fontWeight="bold" fill="#27420c" textAnchor="middle" style={SVG_FONT} textLength="12">Ab</text></>],
];
const NavBox = ({ title, items, row, ipad, tml, h, pt, tcls }) => (
  <div className={`rounded-b-[2px] border border-[#4aa0da] bg-[#fdfdfd] ${h}`}>
    <PanelHead title={title} className="h-[23px] pl-[5px]" titleCls={tcls} />
    <div className={pt}>
      {items.map(([n, ic]) => (
        <div key={n} className={`flex items-center ${row} ${ipad}`}>
          <svg width="28" height="28" viewBox="0 0 28 28" className="shrink-0">{ic}</svg>
          <span className={`${tml} ${n === "Appearance" ? "text-[#3a9fe0] underline" : "text-[#1e80bd]"}`}>{n}</span>
        </div>
      ))}
    </div>
  </div>
);

const DlgBtn = ({ children, className = "" }) => (
  <div className={`h-[22px] w-[83px] rounded-[2px] border border-[#1180be] bg-linear-to-b from-white to-[#dcdcdc] pr-px text-center leading-[21px] text-black ${className}`}>{children}</div>
);

const Dialog = () => (
  <div className="absolute top-[118px] left-[374px] flex h-[812px] w-[973px] flex-col border border-[#a8a8a8] bg-[#cbcbcb] shadow-[inset_1px_1px_0_#dadada]">
    <div className="flex h-[24px] shrink-0 items-center bg-linear-to-b from-[#d2d2d2] via-[#bdbdbd] via-20% to-[#cbcbcb] pr-[3px] pl-[5px]">
      <svg width="20" height="20" viewBox="0 0 20 20"><rect width="20" height="20" rx="2" fill="#3f3350" stroke="#6a5c80" strokeWidth=".6" /><path d="M2 17.500V8l4-4.500c3-1 4 1 3.500 3L6.500 8v9.500zM7.500 17.500V9l4-4.500c3-1 4 1 3.500 3.500l-3 2v7.500zM13 17.500V12l2.500-2c2-.5 2.800.5 2.500 2.500v5z" fill="#fff" /></svg>
      <span className="ml-[4px] flex-1 pt-[2px] text-[13px] font-bold tracking-[-0.65px] text-[#f3f3f3]">Chart Wizard</span>
      <WinBtn kind="max" w="w-[19px]" /><div className="w-[2px]" /><WinBtn kind="x" w="w-[19px]" />
    </div>
    <div className="mr-[3px] mb-[3px] ml-[3px] flex flex-1 flex-col bg-[#fdfdfd]">
      <div className="flex h-[736px] shrink-0">
        <div className="mt-[7px] ml-[7px] flex w-[153px] shrink-0 flex-col gap-[6px]">
          <NavBox title="Construction" items={NAV1} row="h-[36px]" ipad="pl-[13px]" tml="ml-[12px]" h="h-[178px]" pt="pt-[5px]" tcls="text-[12px] tracking-[-0.45px]" />
          <NavBox title="Presentation" items={NAV2} row="h-[40px]" ipad="pl-[14px]" tml="ml-[15px]" h="h-[394px]" pt="pt-[5px]" tcls="text-[12px] tracking-[-0.65px]" />
        </div>
        <div className="ml-[8px] flex w-[790px] shrink-0 flex-col">
          <div className="h-[42px] shrink-0 border-b border-[#ababab] pt-[7px] text-[24px] leading-[30px] tracking-[-0.45px] whitespace-nowrap text-black">Appearance</div>
          <div className="mt-[8px] flex h-[27px] shrink-0 rounded-[2px] border border-[#d4d4d4]">
            <span className="-ml-px w-[45px] pt-[2px] leading-[15px] whitespace-nowrap">Palette:</span>
            <div className="-mt-px flex h-[20px] w-[237px] items-center border border-[#b0b0b0] bg-white pr-px pl-[2px]">
              <span className="flex-1">Default</span>
              <div className="mr-[4px] flex gap-px">
                <div className="h-[10px] w-[10px] border border-[#777] bg-[#4f81bd]" /><div className="h-[10px] w-[10px] border border-[#777] bg-[#c0504d]" /><div className="h-[10px] w-[10px] border border-[#777] bg-[#9bbb59]" />
                <div className="h-[10px] w-[10px] border border-[#777] bg-[#8064a2]" /><div className="h-[10px] w-[10px] border border-[#777] bg-[#4bacc6]" /><div className="h-[10px] w-[10px] border border-[#777] bg-[#f79646]" />
              </div>
              <BlueBtn className="h-[16px] w-[13px]"><Chevron /></BlueBtn>
            </div>
            <span className="ml-auto w-[41px] pt-[2px] leading-[15px]">Style:</span>
            <div className="-mt-px -mr-px flex h-[20px] w-[237px] items-center border border-[#b0b0b0] bg-white pr-[2px] pl-[2px]">
              <span className="flex-1 tracking-[-0.12px]">Default (All Colors)</span>
              <BlueBtn className="h-[16px] w-[13px]"><Chevron /></BlueBtn>
            </div>
          </div>
          <div className="h-[606px] shrink-0 rounded-[2px] border border-[#d0d0d0] p-px">
            <div className="h-[602px] overflow-hidden border border-[#b0b0b0] bg-white"><Chart /></div>
          </div>
          <div className="mt-[6px] flex h-[40px] w-[789px] shrink-0 rounded-[2px] border border-[#cfcfcf] bg-[#ffffe1] pt-[5px] pl-[5px]">
            <svg width="26" height="26" viewBox="0 0 26 26"><circle cx="12.500" cy="12.500" r="12" fill="#fff" stroke="#6a86ad" /><circle cx="12.500" cy="12.500" r="9.800" fill="url(#gInfo)" stroke="#2a5aa3" /><path d="M10.300 5.500h4.400l-1 9h-2.400z" fill="#fff" /><circle cx="12.500" cy="17.800" r="1.900" fill="#fff" /></svg>
            <div className="ml-[10px] h-[15px] overflow-hidden text-[14px] leading-[19px] tracking-[-0.095px] whitespace-nowrap text-black">Choose a palette to color series or their data points. Also choose the style, which specifies the chart's appearance de...</div>
          </div>
        </div>
      </div>
      <div className="mr-[2px] h-px shrink-0 bg-[#ababab]" />
      <div className="flex flex-1 justify-end pt-[12px] pr-[22px]">
        <DlgBtn>&lt;&lt; Previous</DlgBtn>
        <DlgBtn className="ml-[6px]">Next &gt;&gt;</DlgBtn>
        <DlgBtn className="ml-[24px]">Finish</DlgBtn>
        <DlgBtn className="ml-[6px]">Cancel</DlgBtn>
      </div>
    </div>
    <svg width="11" height="11" viewBox="0 0 11 11" className="absolute right-[3px] bottom-[3px]"><path d="M8 0h2v2H8zM8 4h2v2H8zM8 8h2v2H8zM4 4h2v2H4zM4 8h2v2H4zM0 8h2v2H0z" fill="#1180be" /></svg>
  </div>
);

const Tab = ({ children, w }) => <div className={`mr-[5px] h-[21px] rounded-t-[3px] border border-b-0 border-[#cacaca] bg-linear-to-b from-[#f7f7f7] to-[#dedede] pr-[2px] text-center text-black leading-[21px] tracking-[-0.25px] ${w}`}>{children}</div>;

export default function App() {
  return (
    <div className={`relative h-[941px] w-[1577px] overflow-hidden bg-[#181818] text-[11px] tracking-[-0.15px] ${UI}`}>
      <Defs />
      <div className="flex h-[824px]">
        <div className="flex h-[824px] w-[1544px] shrink-0 flex-col bg-white">
          {/* title bar */}
          <div className="flex h-[26px] w-[1536px] shrink-0 items-center border-b border-l border-b-[#a9a9a9] border-l-[#4a86c8] bg-linear-to-b from-[#bdbdbd] to-[#cbcbcb]">
            <div className="ml-[2px] mt-[2px]"><AppIcon /></div>
            <svg width="56" height="25" viewBox="0 0 56 25" className="ml-[3px]"><path d="M3 1h51L40 16c-6 7-9 8.500-15 8.500H5C1 17 1 9 3 1z" fill="#d3eaff" stroke="#5ea9dc" /><path d="M14 10.500h6M14 12.500l3 3 3-3z" fill="#fff" stroke="#1180be" strokeWidth="1.200" /></svg>
            <div className="flex-1 pr-[7px] pt-[3px] text-center text-[14.500px] tracking-[-0.550px] whitespace-pre"><span className="text-[#cbe3f8]">Example3_Statistics</span><span className="text-[#8e8e8e]"> - FlexGUI (Enterprise Edition)</span></div>
            <div className="flex gap-[2px] pt-[1px] pr-px"><WinBtn kind="full" w="w-[19px]" /><WinBtn kind="min" /><WinBtn kind="restore" /><WinBtn kind="x" /></div>
          </div>
          {/* ribbon tabs */}
          <div className="flex h-[22px] w-[1536px] shrink-0 items-end bg-linear-to-b from-[#e3e3e3] to-[#ececec] pl-[4px]">
            <div className="flex h-[21px] w-[64px] items-center justify-center rounded-t-[2px] border border-b-0 border-[#1180be] bg-linear-to-b from-[#bfe2ff] via-white to-[#c7e6ff] pt-px"><AppIcon /></div>
            <div className="z-10 -mb-px mr-[5px] h-[22px] w-[36px] rounded-t-[3px] border border-b-0 border-[#1180be] bg-[#fbfbfb] pr-[2px] text-center leading-[21px]">Main</div>
            <Tab w="w-[45px]">Design</Tab>
            <Tab w="w-[38px]">Tools</Tab>
          </div>
          {/* ribbon */}
          <div className="ml-[2px] flex h-[93px] w-[1534px] shrink-0 border-y border-l border-[#1180be] bg-linear-to-b from-[#f2f2f2] to-[#dcdcdc] pt-[2px] pl-[2px]">
            <div className="flex w-[1492px] shrink-0 gap-[2px] overflow-hidden">
              <Group w="w-[485px]" caption="File" cc="pr-[2px]">
                <RBtn icon="create" w="w-[42px]" lines={["Create"]} /><RBtn icon="open" w="w-[44px]" lines={["Open"]} /><RBtn icon="open" w="w-[72px]" lines={["Open Remote"]} />
                <RBtn icon="save" w="w-[45px]" lines={["Save"]} /><RBtn icon="saveas" w="w-[43px]" lines={["Save as"]} /><Sep />
                <RBtn icon="initial" w="w-[53px]" lines={["Set Initial", "Values"]} /><RBtn icon="upload" w="w-[42px]" lines={["Upload"]} drop /><RBtn icon="preview" w="w-[44px]" lines={["Preview"]} drop /><Sep />
                <RBtn icon="check" w="w-[45px]" lines={["Validate", "Form"]} /><Sep /><RBtn icon="close" w="w-[43px]" lines={["Close"]} />
              </Group>
              <Group w="w-[304px]">
                <RBtn icon="undo" w="w-[42px]" lines={["Undo"]} /><RBtn icon="redo" w="w-[43px]" lines={["Redo"]} /><RBtn icon="cut" w="w-[43px]" lines={["Cut"]} /><RBtn icon="copy" w="w-[43px]" lines={["Copy"]} drop />
                <RBtn icon="paste" w="w-[43px]" lines={["Paste"]} /><RBtn icon="delete" w="w-[43px]" lines={["Delete"]} /><RBtn icon="find" w="w-[44px]" lines={["Find"]} />
              </Group>
              <Group w="w-[156px]"><RBtn icon="tools" w="w-[43px]" lines={["Tools"]} drop /><RBtn icon="messages" w="w-[55px]" lines={["Messages"]} /><RBtn icon="props" w="w-[55px]" lines={["Properties"]} active /></Group>
              <Group w="w-[91px]"><RBtn icon="edit" w="w-[43px]" lines={["Edit"]} /><RBtn icon="check" w="w-[46px]" lines={["Validate"]} /></Group>
              <Group w="w-[76px]"><RBtn icon="maps" w="w-[73px]" lines={["Edit Mappings"]} /></Group>
              <Group w="w-[61px]"><RBtn icon="rules" w="w-[57px]" lines={["Rules"]} /></Group>
              <Group w="w-[89px]"><RBtn icon="addedit" w="w-[86px]" lines={["Add/Edit", "Rule"]} /></Group>
              <Group w="w-[46px]"><div className="flex w-full flex-col items-center pt-[41px] pr-px"><div className="h-[13px] leading-[14px]">Buses</div><DropMark className="mt-[2px] text-[#0a84c6]" /></div></Group>
              <Group w="w-[286px]" caption="Localization"><RBtn icon="refresh" w="w-[44px]" lines={["Refresh"]} /><RBtn icon="add" w="w-[44px]" lines={["Add"]} /><RBtn icon="del2" w="w-[42px]" lines={["Delete"]} drop dim /><RBtn icon="res" w="w-[58px]" lines={["Resources"]} /></Group>
            </div>
            <div className="flex h-[87px] w-[12px] shrink-0 items-center justify-center border border-[#1180be] bg-linear-to-r from-[#f8fbfd] to-[#dcdcdc]"><Chevron right /></div>
            <div className="flex flex-1 items-end justify-center pr-[4px] pb-[10px]"><Chevron up /></div>
          </div>
          {/* body */}
          <div className="flex h-[626px] w-[1536px] shrink-0 bg-[#fdfdfd]">
            <LeftPanel />
            <Designer />
            <RightPanel />
          </div>
          {/* bottom tabs + status */}
          <div className="flex h-[24px] w-[1536px] shrink-0 items-end gap-[5px] bg-[#fdfdfd] pl-[6px] leading-[23px]">
            <div className="h-[21px] w-[62px] rounded-t-[3px] border border-b-0 border-[#1180be] bg-linear-to-b from-white to-[#e4e4e4] pr-[2px] text-center">Messages</div>
            <div className="h-[21px] w-[48px] rounded-t-[3px] border border-b-0 border-[#1180be] bg-linear-to-b from-white to-[#e4e4e4] pr-[2px] text-center">Search</div>
          </div>
          <div className="h-[25px] w-[1536px] shrink-0 border-2 border-t border-[#1180be] bg-linear-to-b from-white to-[#d8d8d8] pr-[5px] text-right leading-[23px] tracking-[-0.19px]">531d-9550-4900-bce9-7c8618381bd4</div>
        </div>
        <div className="flex flex-1 flex-col">
          <div className="h-[40px] border-b border-[#222] bg-[#2f2f2f]" />
          <div className="h-[89px] border-b border-[#555] bg-[#3c3c3c] pt-[14px]">
            <svg width="12" height="20" viewBox="0 0 12 20"><path d="M-8 0H5L10.500 6v8L5 20H-8z" fill="#ee2346" /><text x="-5.500" y="14" fontSize="11" fontWeight="bold" fill="#fff" style={SVG_FONT} textLength="15.500">BP</text></svg>
          </div>
        </div>
      </div>
      {/* page below the window */}
      <div className="flex h-[117px] justify-between overflow-hidden font-['Noto_Sans',sans-serif] text-[17.500px] tracking-[-0.56px] text-[#dcdcdc]">
        <div className="-mt-[12px] pl-[64px] [clip-path:inset(12px_0_0_0)]">
          <div className="pl-[16px] leading-[36px]">Supported platforms</div>
          <div className="pl-[16px] leading-[37px]">Tooling</div>
          <div className="flex items-center leading-[38px]"><svg width="7" height="10" viewBox="0 0 7 10" className="mr-[7px] ml-[2px]"><path d="M1 1l4 4-4 4" fill="none" stroke="#ccc" strokeWidth="1.500" /></svg>Tutorials</div>
          <div className="pl-[16px] leading-[36px]">Hosting models</div>
        </div>
        <div className="pt-[24px] pr-[191px] leading-[36px] tracking-[-0.15px]">s this</div>
      </div>
      <div className="absolute top-[929px] left-[419px] flex h-[12px] w-[21px] justify-center bg-[#424242]"><svg width="7" height="5" viewBox="0 0 7 5"><path d="M0 1h7L3.500 4.500z" fill="#fff" /></svg></div>
      <Dialog />
    </div>
  );
}
